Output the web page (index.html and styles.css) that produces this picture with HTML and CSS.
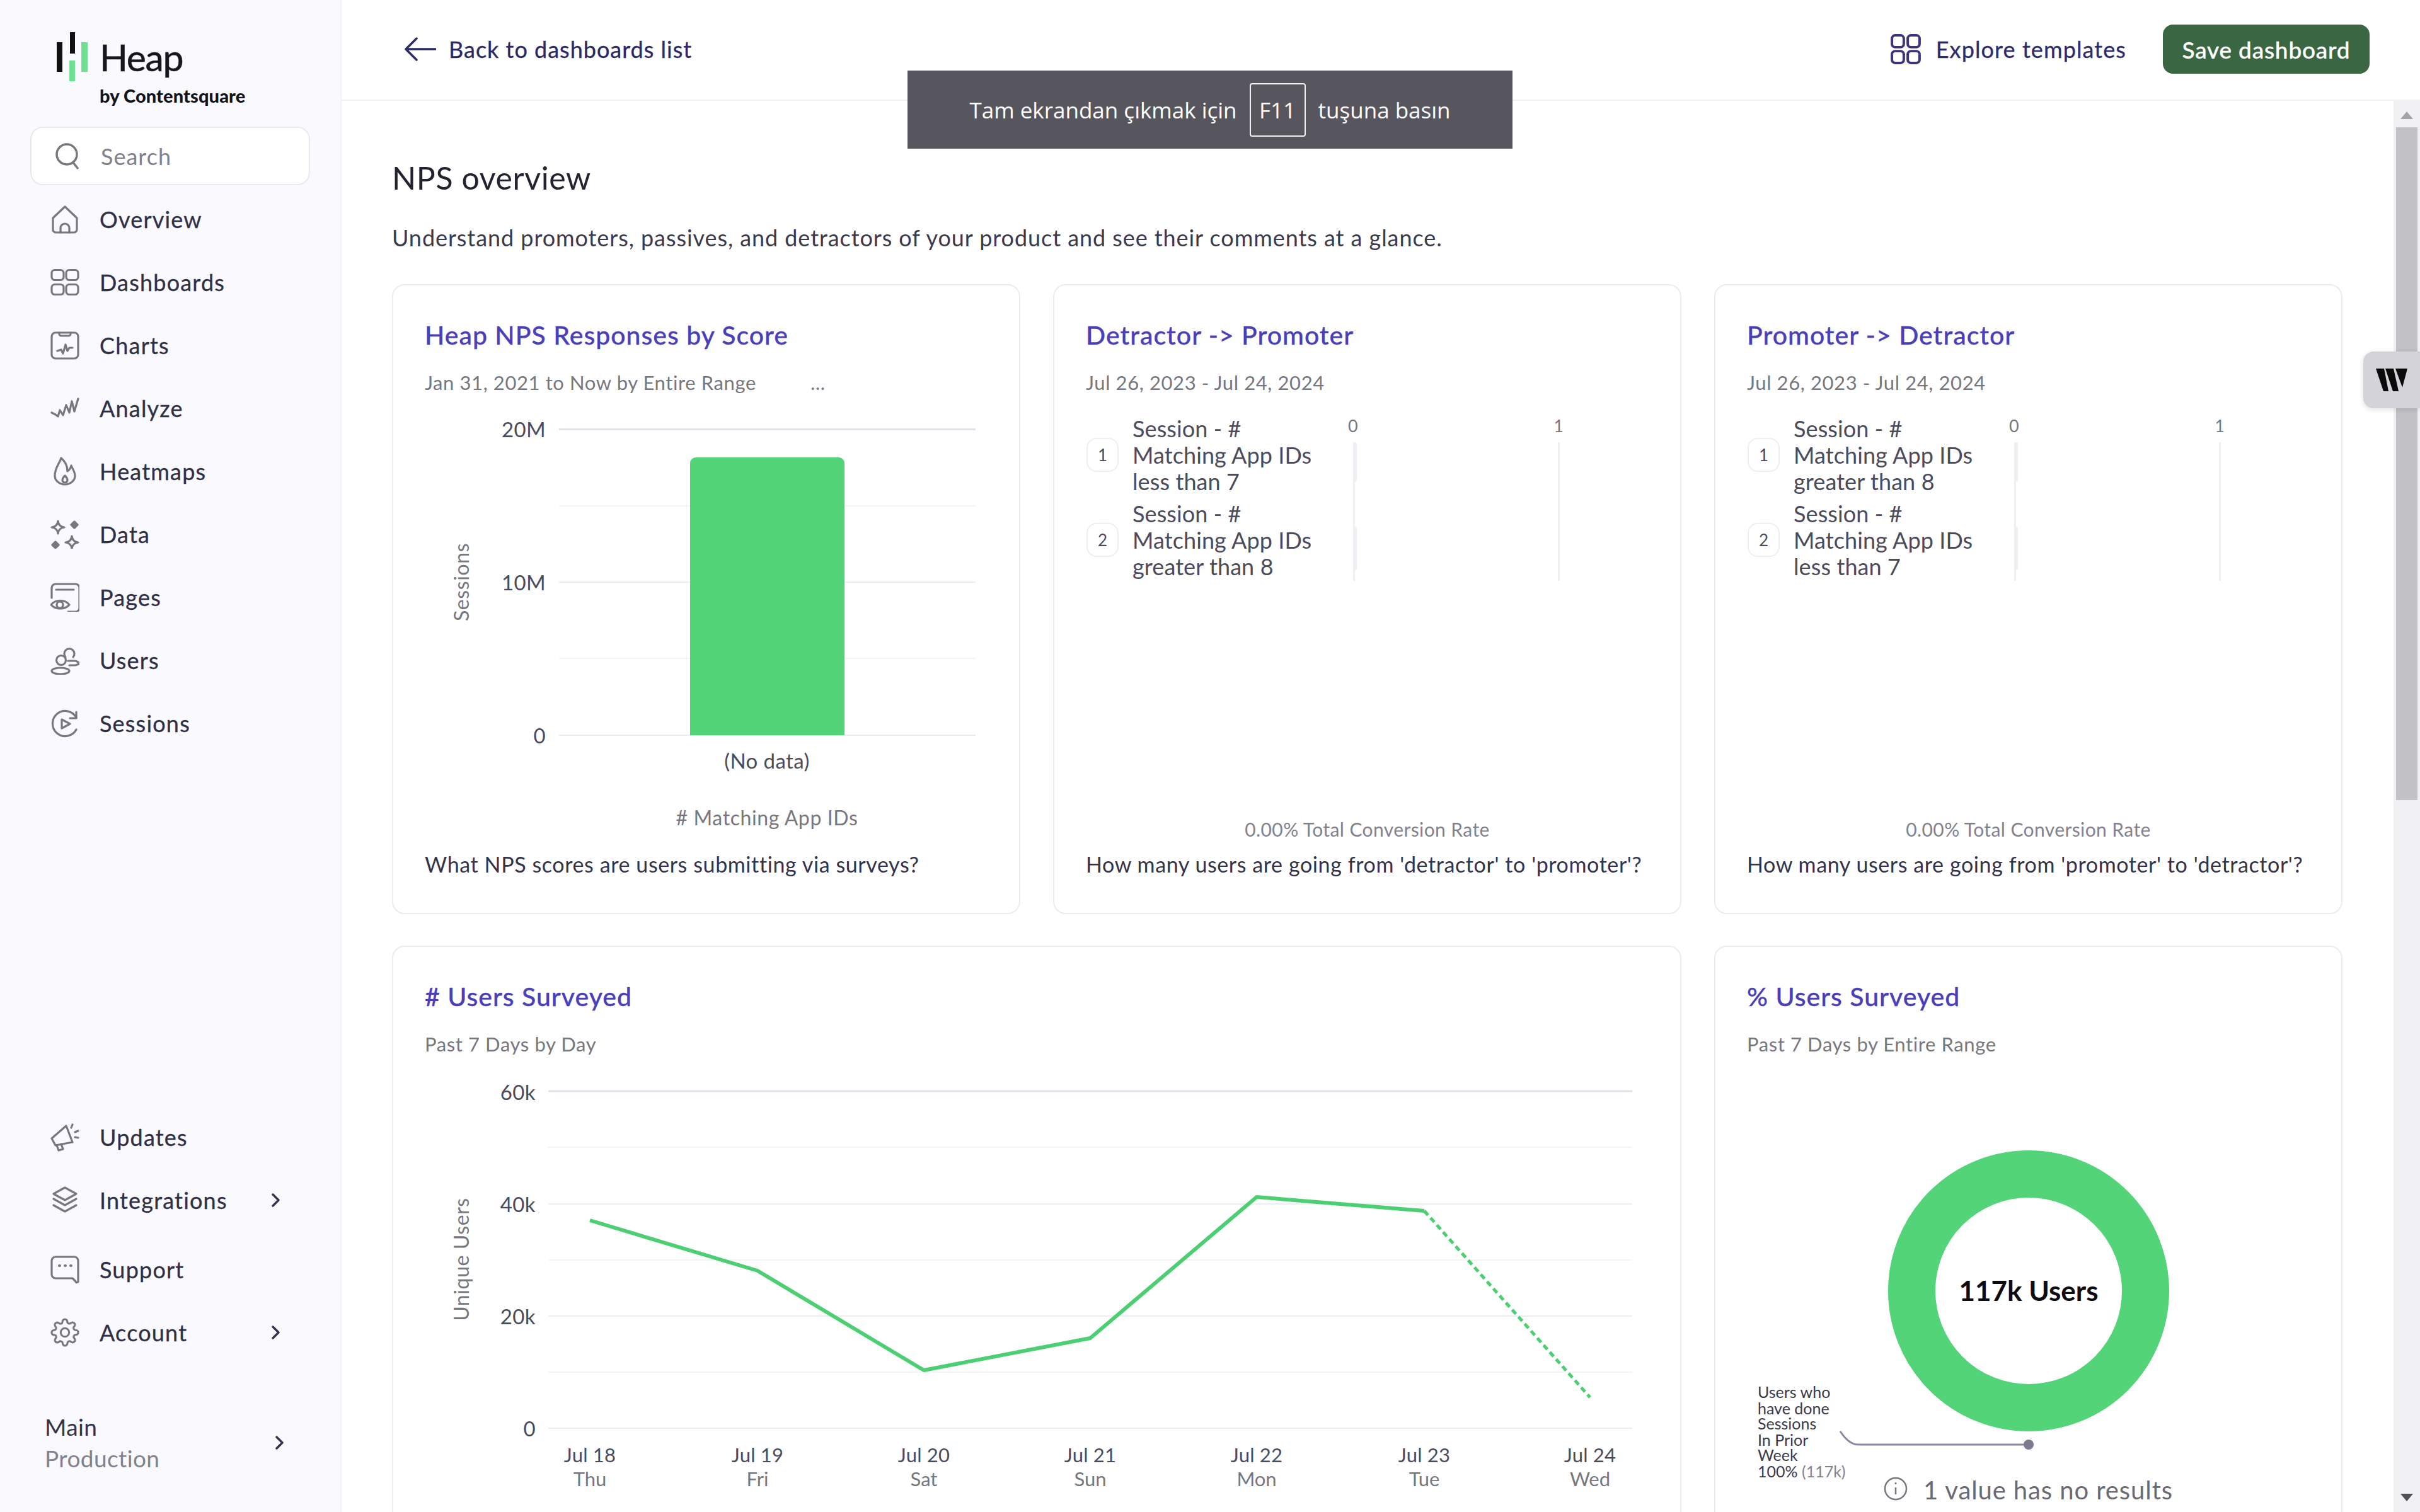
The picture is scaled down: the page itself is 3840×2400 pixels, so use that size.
FILE: index.html
```html
<!DOCTYPE html>
<html lang="en">
<head>
<meta charset="utf-8">
<title>NPS overview</title>
<link rel="stylesheet" href="styles.css">
</head>
<body>
<div class="app">
  <aside class="sidebar">
    <div class="logo">
      <svg class="logo-mark" viewBox="0 0 50 78"><rect x="1" y="16" width="9" height="47" fill="#111"/><rect x="22" y="0" width="8" height="34" fill="#111"/><rect x="21" y="45" width="9" height="33" fill="#6fe08f"/><rect x="40" y="16" width="10" height="47" fill="#6fe08f"/></svg>
      <div class="logo-text"><div class="logo-name">Heap</div><div class="logo-by">by Contentsquare</div></div>
    </div>
    <div class="search">
      <svg class="search-icon" viewBox="0 0 40 46"><circle cx="19" cy="20" r="16"/><path d="M29 33l8 10"/></svg>
      <span>Search</span>
    </div>
    <nav class="nav">
      <a class="nav-item"><svg class="ico" viewBox="0 0 46 46"><path d="M4 21L23 3l19 18v18a5 5 0 0 1-5 5H9a5 5 0 0 1-5-5z"/><path d="M16 44v-7a7 7 0 0 1 14 0v7"/></svg>Overview</a>
      <a class="nav-item"><svg class="ico" viewBox="0 0 46 46"><rect x="2" y="3.500" width="19" height="16" rx="5"/><rect x="25" y="3.500" width="19" height="16" rx="5"/><rect x="2" y="26.500" width="19" height="16" rx="5"/><rect x="25" y="26.500" width="19" height="16" rx="5"/></svg>Dashboards</a>
      <a class="nav-item"><svg class="ico" viewBox="0 0 46 46"><rect x="2" y="3" width="42" height="41" rx="6"/><path d="M14 3v2a3 3 0 0 0 3 3h12a3 3 0 0 0 3-3V3"/><path d="M11 32l6-2 3 6 4-14 3 10 3-5h5"/></svg>Charts</a>
      <a class="nav-item"><svg class="ico" viewBox="0 0 46 46"><path d="M2 30l6 3 4 3 3-10 5 8 5-16 5 12 4-18 4 16 6-20"/></svg>Analyze</a>
      <a class="nav-item"><svg class="ico" viewBox="0 0 46 46"><path d="M17 2C15 10 7 17 7 30a16 14 0 0 0 32 0c0-6-4-11-6-16-1 5-3 7-6 9 0-9-4-16-10-21z"/><path d="M23 30c-3 3-4 5-4 7a4 4 0 0 0 8 0c0-2-1-4-4-7z"/></svg>Heatmaps</a>
      <a class="nav-item"><svg class="ico" viewBox="0 0 46 46"><path d="M12 2q1 9 10 10q-9 1-10 10q-1-9-10-10q9-1 10-10z"/><path d="M34 26q1 9 10 10q-9 1-10 10q-1-9-10-10q9-1 10-10z"/><path class="solid" d="M38 3l5 5-5 5-5-5zM8 35l5 5-5 5-5-5z"/></svg>Data</a>
      <a class="nav-item"><svg class="ico" viewBox="0 0 46 46"><path d="M2 24V8a6 6 0 0 1 6-6h32a6 6 0 0 1 6 6v32a6 6 0 0 1-6 6H28"/><path d="M9 11h28"/><path d="M1 35c7-9 22-9 29 0-7 8-22 8-29 0z"/><circle cx="15" cy="35" r="5"/></svg>Pages</a>
      <a class="nav-item"><svg class="ico" viewBox="0 0 46 46"><circle cx="17" cy="23" r="7.500"/><path d="M24 18a8 8 0 1 1 12 0"/><ellipse cx="16" cy="40" rx="14" ry="5"/><path d="M28 24h10c5 0 7 3 7 4s-3 3-7 3H30"/></svg>Users</a>
      <a class="nav-item"><svg class="ico" viewBox="0 0 46 46"><path d="M41 33A20 20 0 1 1 41 14"/><path d="M41 5v10H31"/><path d="M18 17l13 7-13 7z"/></svg>Sessions</a>
    </nav>
    <div class="nav nav-bottom">
      <a class="nav-item"><svg class="ico" viewBox="0 0 46 46"><path d="M2 25L25 5l10 26-27 5z"/><path d="M10 36l3 8 7-2-3-8"/><path d="M33 8l2-5M39 15l5-2M39 23l5 1"/></svg>Updates</a>
      <a class="nav-item"><svg class="ico" viewBox="0 0 46 46"><path d="M23 3l18 10-18 10L5 13z"/><path d="M5 21l18 10 18-10M5 31l18 10 18-10"/></svg>Integrations<svg class="chev" viewBox="0 0 16 24"><path d="M3 3l9 9-9 9"/></svg></a>
      <a class="nav-item nav-gap"><svg class="ico" viewBox="0 0 46 46"><path d="M8 3h30a6 6 0 0 1 6 6v32a2 2 0 0 1-4 1l-5-5H8a6 6 0 0 1-6-6V9a6 6 0 0 1 6-6z"/><path class="dots" d="M14 17h1M23 17h1M32 17h1"/></svg>Support</a>
      <a class="nav-item"><svg class="ico" viewBox="0 0 24 24"><circle cx="12" cy="12" r="3.500"/><path class="thin" d="M19.400 15a1.650 1.650 0 0 0 .33 1.820l.06.06a2 2 0 0 1 0 2.830 2 2 0 0 1-2.830 0l-.06-.06a1.650 1.650 0 0 0-1.820-.33 1.650 1.650 0 0 0-1 1.510V21a2 2 0 0 1-2 2 2 2 0 0 1-2-2v-.09A1.650 1.650 0 0 0 9 19.400a1.650 1.650 0 0 0-1.820.33l-.06.06a2 2 0 0 1-2.830 0 2 2 0 0 1 0-2.830l.06-.06a1.650 1.650 0 0 0 .33-1.820 1.650 1.650 0 0 0-1.510-1H3a2 2 0 0 1-2-2 2 2 0 0 1 2-2h.09A1.650 1.650 0 0 0 4.600 9a1.650 1.650 0 0 0-.33-1.820l-.06-.06a2 2 0 0 1 0-2.830 2 2 0 0 1 2.830 0l.06.06a1.650 1.650 0 0 0 1.820.33H9a1.650 1.650 0 0 0 1-1.510V3a2 2 0 0 1 2-2 2 2 0 0 1 2 2v.09a1.650 1.650 0 0 0 1 1.510 1.650 1.650 0 0 0 1.820-.33l.06-.06a2 2 0 0 1 2.830 0 2 2 0 0 1 0 2.830l-.06.06a1.650 1.650 0 0 0-.33 1.820V9a1.650 1.650 0 0 0 1.510 1H21a2 2 0 0 1 2 2 2 2 0 0 1-2 2h-.09a1.650 1.650 0 0 0-1.510 1z"/></svg>Account<svg class="chev" viewBox="0 0 16 24"><path d="M3 3l9 9-9 9"/></svg></a>
    </div>
    <div class="env">
      <div><div class="env-main">Main</div><div class="env-sub">Production</div></div>
      <svg class="chev" viewBox="0 0 16 24"><path d="M3 3l9 9-9 9"/></svg>
    </div>
  </aside>

  <main class="main">
    <header class="topbar">
      <a class="back"><svg class="back-arrow" viewBox="0 0 50 38"><path d="M49 19H3M19 2L2 19l17 17"/></svg>Back to dashboards list</a>
      <div class="top-actions">
        <a class="explore"><svg class="explore-icon" viewBox="0 0 46 46"><rect x="2" y="2" width="18" height="18" rx="5"/><rect x="26" y="2" width="18" height="18" rx="5"/><rect x="2" y="26" width="18" height="18" rx="5"/><rect x="26" y="26" width="18" height="18" rx="5"/></svg>Explore templates</a>
        <button class="save">Save dashboard</button>
      </div>
    </header>
    <div class="body">
      <div class="content">
        <h1 class="page-title">NPS overview</h1>
        <p class="page-sub">Understand promoters, passives, and detractors of your product and see their comments at a glance.</p>
        <div class="grid">

          <section class="card">
            <h2 class="card-title">Heap NPS Responses by Score</h2>
            <div class="card-sub">Jan 31, 2021 to Now by Entire Range<span class="more">...</span></div>
            <svg class="chart" viewBox="624 628 993 722">
              <path class="grid-major" d="M887 681.500H1548"/>
              <path class="grid-minor" d="M887 803H1548M887 1045H1548"/>
              <path class="grid-mid" d="M887 924H1548M887 1167H1548"/>
              <path class="bar" d="M1095 1167V735a9 9 0 0 1 9-9h227a9 9 0 0 1 9 9v432z"/>
              <text class="tick end" x="866" y="694">20M</text>
              <text class="tick end" x="866" y="937">10M</text>
              <text class="tick end" x="866" y="1180">0</text>
              <text class="axis-title mid" transform="translate(744 924) rotate(-90)">Sessions</text>
              <text class="tick mid" x="1217" y="1220">(No data)</text>
              <text class="axis-title mid" x="1217" y="1310"># Matching App IDs</text>
            </svg>
            <p class="card-foot">What NPS scores are users submitting via surveys?</p>
          </section>

          <section class="card">
            <h2 class="card-title">Detractor -&gt; Promoter</h2>
            <div class="card-sub">Jul 26, 2023 - Jul 24, 2024</div>
            <div class="funnel">
              <div class="funnel-top">
                <div class="steps">
                  <div class="step"><span class="badge">1</span><span class="step-label">Session - #<br>Matching App IDs<br>less than 7</span></div>
                  <div class="step"><span class="badge">2</span><span class="step-label">Session - #<br>Matching App IDs<br>greater than 8</span></div>
                </div>
                <div class="plot">
                  <div class="ticks"><span>0</span><span>1</span></div>
                  <div class="axes"><div class="axis-zero"><i></i><i></i></div><div class="axis-one"></div></div>
                </div>
              </div>
              <div class="rate">0.00% Total Conversion Rate</div>
            </div>
            <p class="card-foot">How many users are going from 'detractor' to 'promoter'?</p>
          </section>

          <section class="card">
            <h2 class="card-title">Promoter -&gt; Detractor</h2>
            <div class="card-sub">Jul 26, 2023 - Jul 24, 2024</div>
            <div class="funnel">
              <div class="funnel-top">
                <div class="steps">
                  <div class="step"><span class="badge">1</span><span class="step-label">Session - #<br>Matching App IDs<br>greater than 8</span></div>
                  <div class="step"><span class="badge">2</span><span class="step-label">Session - #<br>Matching App IDs<br>less than 7</span></div>
                </div>
                <div class="plot">
                  <div class="ticks"><span>0</span><span>1</span></div>
                  <div class="axes"><div class="axis-zero"><i></i><i></i></div><div class="axis-one"></div></div>
                </div>
              </div>
              <div class="rate">0.00% Total Conversion Rate</div>
            </div>
            <p class="card-foot">How many users are going from 'promoter' to 'detractor'?</p>
          </section>

          <section class="card card-wide">
            <h2 class="card-title"># Users Surveyed</h2>
            <div class="card-sub">Past 7 Days by Day</div>
            <svg class="chart" viewBox="624 1678 2042 722">
              <path class="grid-major" d="M870 1732H2590"/>
              <path class="grid-minor" d="M870 1821H2590M870 2000H2590M870 2178H2590"/>
              <path class="grid-mid" d="M870 1911H2590M870 2089H2590M870 2267H2590"/>
              <polyline class="line" points="936,1937 1202,2017 1466,2175 1730,2124 1994,1900 2260,1922"/>
              <path class="line-dash" d="M2260 1922L2523 2218"/>
              <text class="tick end" x="850" y="1746">60k</text>
              <text class="tick end" x="850" y="1924">40k</text>
              <text class="tick end" x="850" y="2102">20k</text>
              <text class="tick end" x="850" y="2280">0</text>
              <text class="axis-title mid" transform="translate(744 1999) rotate(-90)">Unique Users</text>
              <g class="mid">
                <text class="xtick" x="936" y="2321">Jul 18</text><text class="day" x="936" y="2359">Thu</text>
                <text class="xtick" x="1202" y="2321">Jul 19</text><text class="day" x="1202" y="2359">Fri</text>
                <text class="xtick" x="1466" y="2321">Jul 20</text><text class="day" x="1466" y="2359">Sat</text>
                <text class="xtick" x="1730" y="2321">Jul 21</text><text class="day" x="1730" y="2359">Sun</text>
                <text class="xtick" x="1994" y="2321">Jul 22</text><text class="day" x="1994" y="2359">Mon</text>
                <text class="xtick" x="2260" y="2321">Jul 23</text><text class="day" x="2260" y="2359">Tue</text>
                <text class="xtick" x="2523" y="2321">Jul 24</text><text class="day" x="2523" y="2359">Wed</text>
              </g>
            </svg>
          </section>

          <section class="card">
            <h2 class="card-title">% Users Surveyed</h2>
            <div class="card-sub">Past 7 Days by Entire Range</div>
            <svg class="chart" viewBox="2722 1678 993 722">
              <circle class="donut" cx="3219" cy="2049" r="185.500"/>
              <text class="donut-label mid" x="3219" y="2065">117k Users</text>
              <path class="leader" d="M2920 2272q14 21 28 21H3219"/>
              <circle class="leader-dot" cx="3219" cy="2293" r="8"/>
              <g class="leader-text">
                <text x="2789" y="2219">Users who</text>
                <text x="2789" y="2245">have done</text>
                <text x="2789" y="2269">Sessions</text>
                <text x="2789" y="2295">In Prior</text>
                <text x="2789" y="2319">Week</text>
                <text x="2789" y="2345">100% <tspan class="leader-muted">(117k)</tspan></text>
              </g>
              <g class="info">
                <circle cx="3008" cy="2363" r="17"/>
                <path d="M3008 2361v11M3008 2353v3"/>
              </g>
              <text class="no-results" x="3052" y="2380">1 value has no results</text>
            </svg>
          </section>

        </div>
      </div>
      <div class="scrollbar">
        <span class="arrow-up"></span>
        <div class="thumb"></div>
        <span class="arrow-down"></span>
      </div>
    </div>
  </main>
</div>

<div class="toast">Tam ekrandan çıkmak için<kbd class="key">F11</kbd>tuşuna basın</div>
<div class="widget"><svg class="widget-mark" viewBox="0 0 50 36"><path d="M0 0h13l7 36h-8zM15 0h13l8 36h-9zM31 0h19l-8 30z"/></svg></div>
</body>
</html>
```
FILE: styles.css
```css
* { box-sizing: border-box; }
html, body { margin: 0; padding: 0; }
body {
  width: 3840px;
  height: 2400px;
  overflow: hidden;
  position: relative;
  background: #fff;
  font-family: "Lato", "Liberation Sans", sans-serif;
  color: #33334a;
}
.app { display: flex; width: 3840px; height: 2400px; }

/* Sidebar */
.sidebar {
  width: 542px;
  flex: none;
  display: flex;
  flex-direction: column;
  background: #f9f9fe;
  border-right: 2px solid #f2f2f7;
  padding: 51px 48px 60px;
  height: 2400px;
}
.logo { display: flex; align-items: flex-start; height: 150px; padding-left: 41px; gap: 19px; }
.logo-mark { width: 50px; height: 78px; flex: none; }
.logo-text { display: flex; flex-direction: column; margin-top: 9px; }
.logo-name { font-size: 59px; line-height: 62px; color: #16161e; letter-spacing: -1.400px; -webkit-text-stroke: .5px #16161e; }
.logo-by { font-size: 29px; line-height: 36px; font-weight: 900; color: #14141c; margin-top: 12px; white-space: nowrap; letter-spacing: .1px; }
.search {
  height: 93px;
  width: 444px;
  background: #fff;
  border: 2px solid #e9e9ee;
  border-radius: 20px;
  display: flex;
  align-items: center;
  padding-left: 37px;
  gap: 33px;
  font-size: 36px;
  color: #82828e;
  letter-spacing: 1px;
}
.search-icon { width: 40px; height: 46px; fill: none; stroke: #77777f; stroke-width: 3.500; }
.nav { display: flex; flex-direction: column; margin-top: 4px; margin-left: -48px; }
.nav-bottom { margin-top: auto; }
.nav-item {
  height: 100px;
  display: flex;
  align-items: center;
  padding-left: 80px;
  font-size: 36px;
  color: #2f2f46;
  letter-spacing: 1.200px;
  -webkit-text-stroke: .3px #2f2f46;
  position: relative;
}
.nav-gap { margin-top: 10px; }
.ico {
  width: 46px;
  height: 46px;
  flex: none;
  margin-right: 32px;
  fill: none;
  stroke: #77777f;
  stroke-width: 3.200;
  stroke-linejoin: round;
  stroke-linecap: round;
}
.ico .solid { fill: #77777f; }
.ico .dots { stroke-width: 4; }
.ico .thin, .ico circle[r="3.500"] { stroke-width: 1.600; }
.chev { width: 16px; height: 24px; fill: none; stroke: #33334a; stroke-width: 3.500; stroke-linecap: round; stroke-linejoin: round; flex: none; }
.nav-item .chev { position: absolute; left: 430px; top: 38px; }
.env { display: flex; align-items: center; justify-content: space-between; margin: 75px 40px 0 23px; }
.env-main { font-size: 37px; line-height: 50px; letter-spacing: .4px; color: #33334a; }
.env-sub { font-size: 37px; line-height: 50px; letter-spacing: .4px; color: #82828e; }

/* Main */
.main { flex: 1; display: flex; flex-direction: column; min-width: 0; }
.topbar {
  height: 160px;
  flex: none;
  border-bottom: 2px solid #f2f2f6;
  display: flex;
  align-items: center;
  justify-content: space-between;
  padding: 0 80px 2px 100px;
}
.back { display: flex; align-items: center; gap: 20px; font-size: 36px; color: #2a2866; letter-spacing: 1px; -webkit-text-stroke: .3px #2a2866; }
.back-arrow { width: 50px; height: 38px; fill: none; stroke: #2a2866; stroke-width: 3.500; stroke-linecap: round; stroke-linejoin: round; }
.top-actions { display: flex; align-items: center; gap: 58px; }
.explore { display: flex; align-items: center; gap: 24px; font-size: 36px; color: #2e2a6e; letter-spacing: 1.100px; -webkit-text-stroke: .3px #2e2a6e; }
.explore-icon { width: 48px; height: 48px; fill: none; stroke: #3a3480; stroke-width: 3.800; }
.save {
  width: 328px;
  height: 78px;
  background: #3b6642;
  color: #fff;
  border: 0;
  border-radius: 16px;
  font-family: inherit;
  font-size: 37px;
  font-weight: 500;
  letter-spacing: .8px;
  -webkit-text-stroke: .3px #fff;
  padding: 0;
}
.body { flex: 1; display: flex; min-height: 0; }
.content { flex: 1; min-width: 0; padding: 92px 81px 0 80px; overflow: hidden; }
.page-title { margin: 0; font-size: 50px; line-height: 60px; font-weight: 400; color: #222230; letter-spacing: .6px; }
.page-sub { margin: 43px 0 52px; font-size: 36px; line-height: 44px; color: #3a3a4c; letter-spacing: .93px; white-space: nowrap; }
.grid { display: grid; grid-template-columns: repeat(3, 997px); grid-auto-rows: 1000px; gap: 50px 52px; }
.card {
  background: #fff;
  border: 2px solid #ebebf0;
  border-radius: 20px;
  display: flex;
  flex-direction: column;
  min-width: 0;
}
.card-wide { grid-column: span 2; }
.card-title { margin: 54px 50px 0; font-size: 41px; line-height: 50px; font-weight: 500; color: #4a3fb8; letter-spacing: 1px; white-space: nowrap; -webkit-text-stroke: .3px #4a3fb8; }
.card-sub { margin: 29px 50px 0; font-size: 31px; line-height: 42px; color: #77777f; letter-spacing: .6px; white-space: nowrap; }
.more { margin-left: 86px; }
.card-foot { margin: 0 50px; font-size: 34px; line-height: 44px; color: #33334a; letter-spacing: .6px; white-space: nowrap; }
.chart { display: block; width: 100%; height: 722px; flex: none; }

/* SVG chart parts */
.mid { text-anchor: middle; }
.end { text-anchor: end; }
.grid-major { stroke: #e2e2ea; stroke-width: 3; fill: none; }
.grid-mid { stroke: #ecedf1; stroke-width: 2; fill: none; }
.grid-minor { stroke: #f4f4f7; stroke-width: 2; fill: none; }
.bar { fill: #53d478; }
.tick { font-size: 33px; fill: #4b4b5c; letter-spacing: .4px; }
.xtick { font-size: 31px; fill: #4b4b5c; letter-spacing: .2px; }
.axis-title { font-size: 32px; fill: #77777f; letter-spacing: .6px; }
.day { font-size: 31px; fill: #77777f; }
.line { fill: none; stroke: #4ccf72; stroke-width: 6; stroke-linejoin: round; }
.line-dash { fill: none; stroke: #4ccf72; stroke-width: 5; stroke-dasharray: 9 6; }
.donut { fill: none; stroke: #53d478; stroke-width: 75; }
.donut-label { font-size: 44px; font-weight: 700; fill: #0c0c12; }
.leader { fill: none; stroke: #8a88a0; stroke-width: 3; }
.leader-dot { fill: #7d7a90; }
.leader-text { font-size: 25px; fill: #3a3a4c; }
.leader-muted { fill: #82828e; }
.info { fill: none; stroke: #77777f; stroke-width: 2.500; }
.no-results { font-size: 40px; fill: #6a6a74; letter-spacing: .9px; }

/* Funnel */
.funnel { height: 722px; flex: none; display: flex; flex-direction: column; padding: 0 0 14px 51px; }
.funnel-top { display: flex; }
.steps { width: 423px; flex: none; margin-top: 31px; display: flex; flex-direction: column; gap: 9px; }
.step { display: flex; align-items: center; gap: 22px; }
.badge {
  width: 51px;
  height: 54px;
  flex: none;
  border: 2px solid #efeff3;
  border-radius: 16px;
  display: flex;
  align-items: center;
  justify-content: center;
  font-size: 26px;
  color: #4b4b5c;
}
.step-label { font-size: 36px; line-height: 42px; color: #4b4b5c; white-space: nowrap; letter-spacing: .1px; }
.plot { width: 328px; flex: none; margin-top: 30px; }
.ticks { display: flex; justify-content: space-between; height: 36px; font-size: 27px; line-height: 36px; color: #77777f; margin: 0 0 8px -8px; width: 342px; }
.axes { display: flex; justify-content: space-between; height: 220px; }
.axis-zero { width: 3px; height: 100%; background: #efeff3; position: relative; }
.axis-zero i { display: block; width: 6px; height: 63px; background: #efeff3; border-radius: 3px; }
.axis-zero i + i { margin-top: 71px; height: 69px; }
.axis-one { width: 3px; height: 100%; background: #efeff3; }
.rate { margin: auto 0 0 -51px; text-align: center; font-size: 30px; line-height: 40px; color: #82828e; letter-spacing: .4px; }

/* Scrollbar */
.scrollbar { width: 42px; flex: none; background: #f1f1f4; display: flex; flex-direction: column; align-items: center; position: relative; }
.arrow-up { width: 0; height: 0; margin-top: 17px; border: 10px solid transparent; border-top: 0; border-bottom: 12px solid #a3a3a8; }
.thumb { width: 34px; height: 1068px; margin-top: 13px; background: #c1c1c6; }
.arrow-down { width: 0; height: 0; margin-top: auto; margin-bottom: 17px; border: 10px solid transparent; border-bottom: 0; border-top: 12px solid #505056; }

/* Overlays */
.toast {
  position: absolute;
  left: 1440px;
  top: 112px;
  width: 960px;
  height: 124px;
  background: #57565e;
  color: #fff;
  display: flex;
  align-items: center;
  justify-content: center;
  font-family: "Open Sans", sans-serif;
  font-size: 35px;
  gap: 20px;
}
.key {
  font-family: inherit;
  width: 89px;
  height: 85px;
  border: 2px solid #f0f0f2;
  border-radius: 4px;
  display: flex;
  align-items: center;
  justify-content: center;
}
.widget {
  position: absolute;
  left: 3750px;
  top: 558px;
  width: 90px;
  height: 90px;
  background: #d3d3d9;
  border-radius: 16px 0 0 16px;
  box-shadow: 0 2px 8px rgba(0,0,0,.12);
  display: flex;
  align-items: center;
  padding-left: 20px;
}
.widget-mark { width: 50px; height: 36px; fill: #0b0b0b; }
```
